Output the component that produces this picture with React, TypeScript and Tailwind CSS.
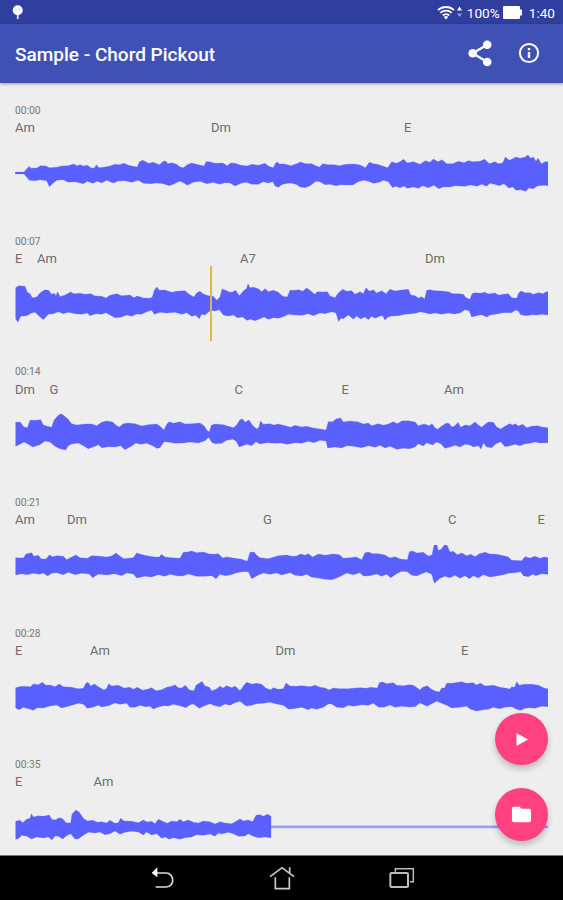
import { MdFolder } from "react-icons/md";

interface Chord {
  name: string;
  x: number;
}

interface Line {
  time: string;
  chords: Chord[];
  // baseline of the wave inside its own coordinates (3 units per px)
  mid: number;
  top: string;
  bottom: string;
  end?: boolean;
}

const lines: Line[] = [
  {
    time: "00:00",
    chords: [
      { name: "Am", x: 0 },
      { name: "Dm", x: 196 },
      { name: "E", x: 389 },
    ],
    mid: 218,
    top: "46,215 72,215 80,206 88,198 92,204 110,203 122,196 138,197 148,202 170,201 185,197 205,196 220,191 232,196 240,193 250,197 262,195 275,204 283,203 289,193 297,202 315,200 330,197 345,192 358,193 372,189 385,195 400,198 412,200 418,184 428,180 437,184 445,189 460,186 478,193 490,183 497,182 504,190 515,187 530,192 540,200 550,202 562,193 575,188 590,192 612,197 618,184 628,184 645,189 668,188 682,196 692,188 705,189 720,194 740,197 757,192 775,195 795,189 806,198 820,202 827,188 832,185 838,191 853,191 873,196 886,192 902,185 917,190 935,190 958,201 968,190 985,193 1003,193 1018,196 1038,192 1062,191 1080,194 1096,202 1108,186 1120,190 1132,192 1150,198 1163,202 1175,184 1190,189 1200,184 1211,177 1222,188 1240,184 1260,192 1276,181 1290,186 1300,176 1314,184 1326,178 1340,190 1358,190 1375,183 1392,187 1405,181 1420,184 1440,183 1454,177 1468,190 1485,184 1495,190 1508,188 1516,170 1528,180 1538,175 1548,170 1560,174 1574,171 1584,164 1592,174 1600,170 1608,183 1614,173 1624,190 1636,184 1644,184",
    bottom: "1644,256 1630,255 1612,257 1600,265 1586,263 1578,273 1562,268 1548,270 1538,260 1526,263 1512,250 1498,256 1484,252 1470,249 1460,258 1445,252 1430,258 1412,254 1395,258 1378,257 1365,256 1350,260 1330,260 1316,265 1302,255 1285,262 1268,256 1255,264 1240,260 1222,264 1212,257 1200,262 1186,258 1178,262 1165,244 1150,240 1138,246 1120,249 1105,243 1090,240 1075,244 1058,254 1040,254 1022,253 1008,256 990,252 975,253 960,244 948,243 930,256 915,262 900,260 888,252 870,248 855,250 843,254 836,261 826,258 818,244 805,248 790,244 775,252 755,252 740,246 725,248 705,257 690,248 675,247 658,252 640,246 620,250 600,243 580,246 562,255 548,246 538,243 520,252 508,256 490,250 470,248 452,250 430,249 415,240 395,246 375,241 355,242 340,248 320,240 305,248 293,243 278,249 262,243 250,250 240,248 225,244 205,246 190,238 170,240 160,248 148,259 140,241 120,238 105,241 88,240 72,221 46,221",
  },
  {
    time: "00:07",
    chords: [
      { name: "E", x: 0 },
      { name: "Am", x: 22 },
      { name: "A7", x: 225 },
      { name: "Dm", x: 410 },
    ],
    mid: 221,
    top: "47,172 56,166 75,168 82,186 90,190 97,202 110,200 120,188 133,179 145,179 155,192 163,189 168,196 173,184 180,199 195,194 212,185 222,190 240,189 255,192 272,190 285,197 305,198 318,203 330,195 350,190 365,196 390,194 402,202 412,197 430,203 450,204 457,200 463,180 470,170 478,180 495,179 515,186 530,183 555,181 567,192 582,200 590,188 600,183 610,191 625,196 640,198 650,210 660,200 666,176 680,181 690,186 700,184 706,179 718,196 730,182 740,174 744,160 750,172 762,171 776,176 785,184 795,175 805,184 820,180 835,186 848,198 862,200 870,180 885,180 897,178 908,183 920,173 930,180 944,192 952,184 970,185 982,184 990,197 1005,202 1015,188 1028,177 1040,183 1055,181 1065,192 1080,184 1090,190 1098,172 1108,183 1120,178 1130,188 1145,181 1158,190 1170,177 1185,182 1205,179 1225,177 1232,194 1245,196 1255,203 1265,199 1274,206 1280,180 1290,178 1303,181 1325,182 1345,184 1358,190 1375,190 1390,192 1398,202 1410,207 1416,190 1425,187 1440,189 1455,186 1465,191 1485,188 1495,194 1512,192 1525,190 1535,202 1550,204 1556,188 1563,182 1575,187 1590,187 1600,192 1615,187 1630,190 1638,184 1644,184",
    bottom: "1644,254 1625,252 1612,254 1595,253 1580,256 1562,253 1555,242 1545,240 1535,247 1510,247 1490,251 1470,254 1460,260 1445,253 1430,256 1415,260 1408,242 1395,238 1380,248 1362,251 1345,248 1325,252 1305,248 1290,251 1275,247 1260,244 1250,248 1235,250 1215,252 1195,256 1175,257 1162,261 1155,270 1148,256 1140,257 1125,264 1115,258 1105,268 1095,260 1082,266 1070,257 1060,267 1045,254 1030,265 1022,264 1016,274 1008,248 995,244 975,250 960,248 940,256 925,250 905,255 885,254 865,252 848,260 835,264 820,262 805,267 792,260 778,266 765,271 752,267 740,270 728,260 712,262 700,254 685,257 670,254 658,238 645,242 632,240 615,254 605,252 598,265 587,255 575,258 560,247 545,252 525,246 500,248 480,246 463,252 455,240 440,244 425,252 410,251 395,258 380,254 362,261 345,262 330,254 318,247 305,252 288,250 270,256 262,248 245,252 225,250 205,246 190,250 175,244 160,250 145,252 130,268 118,258 105,246 95,248 80,256 62,258 54,276 47,266",
  },
  {
    time: "00:14",
    chords: [
      { name: "Dm", x: 0 },
      { name: "G", x: 34.5 },
      { name: "C", x: 219.5 },
      { name: "E", x: 326.5 },
      { name: "Am", x: 429 },
    ],
    mid: 223,
    top: "47,188 60,187 72,202 82,204 90,182 105,182 122,180 130,196 142,200 155,203 162,182 172,170 183,161 194,170 204,178 215,192 230,196 255,193 275,193 290,198 305,188 320,184 338,187 350,198 358,202 370,192 385,190 405,192 425,199 445,195 470,193 480,200 492,211 500,194 508,186 520,191 540,186 555,193 575,192 600,190 612,198 622,213 628,216 634,197 645,193 670,195 685,200 700,204 710,196 720,180 728,178 735,188 747,181 757,196 770,208 777,202 781,184 790,194 810,192 822,196 835,193 855,198 872,203 885,197 905,202 920,200 940,205 960,208 978,211 985,186 998,186 1008,178 1022,175 1030,187 1050,184 1075,187 1090,193 1105,190 1115,198 1135,192 1150,197 1165,193 1180,186 1192,192 1205,184 1225,183 1245,187 1255,198 1272,193 1288,198 1296,192 1305,204 1313,209 1325,199 1340,190 1348,192 1355,202 1364,199 1374,188 1382,203 1395,196 1410,198 1425,187 1435,196 1445,203 1455,194 1465,187 1480,188 1490,202 1502,208 1515,200 1528,192 1538,196 1546,192 1555,199 1568,194 1580,204 1595,200 1612,198 1625,202 1644,204",
    bottom: "1644,249 1620,250 1605,247 1590,251 1575,252 1560,258 1545,254 1530,258 1515,261 1502,246 1488,252 1475,264 1460,262 1450,250 1443,268 1435,258 1420,262 1410,256 1395,254 1380,262 1365,257 1350,262 1335,266 1322,252 1310,247 1298,256 1280,249 1270,259 1255,252 1245,262 1230,267 1210,266 1190,269 1170,260 1155,265 1140,257 1125,263 1105,258 1085,264 1060,260 1040,258 1025,265 1005,262 983,265 978,244 960,242 942,249 925,245 905,251 885,249 862,254 843,250 825,251 800,249 780,253 768,246 755,258 740,254 718,262 708,244 698,239 680,242 665,251 645,252 635,248 626,233 615,243 595,250 570,247 550,250 525,251 505,247 492,246 480,264 470,266 458,258 440,251 422,254 408,250 395,259 375,270 362,258 345,262 325,261 305,264 295,255 285,260 265,267 250,258 235,250 215,253 205,258 197,271 180,267 165,260 150,247 135,244 120,255 98,262 85,254 72,247 60,254 47,260",
  },
  {
    time: "00:21",
    chords: [
      { name: "Am", x: 0 },
      { name: "Dm", x: 52 },
      { name: "G", x: 248 },
      { name: "C", x: 433 },
      { name: "E", x: 522.5 },
    ],
    mid: 616,
    top: "47,594 70,595 78,583 95,579 102,590 115,587 124,598 138,598 148,586 158,591 170,588 190,590 200,600 215,592 228,586 240,594 262,596 275,588 300,590 320,592 335,589 348,580 360,590 372,597 400,594 410,580 422,584 440,588 465,592 478,592 484,584 495,592 515,594 540,596 550,578 562,577 575,574 590,579 610,577 625,582 640,584 655,582 668,595 680,592 705,596 725,599 742,605 750,578 762,577 770,587 780,594 805,597 820,593 835,588 860,586 875,590 888,590 902,583 915,587 925,582 938,592 955,583 975,587 1000,583 1018,585 1030,596 1050,594 1068,592 1085,600 1095,579 1105,577 1118,582 1135,582 1155,586 1170,595 1185,591 1200,598 1222,600 1228,576 1238,574 1250,580 1270,578 1285,589 1296,586 1303,553 1310,553 1315,573 1325,567 1334,555 1342,558 1350,577 1360,575 1372,585 1385,580 1400,588 1412,584 1425,591 1438,582 1455,578 1470,583 1490,584 1510,588 1525,592 1535,602 1565,603 1575,591 1590,595 1605,590 1620,596 1632,592 1644,594",
    bottom: "1644,644 1625,642 1608,648 1598,644 1585,651 1570,648 1562,636 1545,639 1525,641 1510,645 1490,649 1470,652 1450,645 1435,655 1420,648 1408,657 1395,648 1380,656 1365,647 1350,654 1335,650 1320,656 1303,671 1295,644 1280,637 1265,642 1250,649 1235,647 1222,636 1205,635 1190,642 1172,654 1160,644 1145,650 1130,643 1110,648 1090,649 1080,639 1060,645 1040,640 1025,648 1008,656 995,660 975,659 955,655 935,653 920,644 905,649 885,647 870,639 845,646 830,640 810,644 790,640 775,646 755,657 745,636 725,636 705,641 690,646 675,648 660,644 648,657 635,648 615,650 590,650 565,643 548,649 530,648 510,644 495,650 475,645 455,652 435,650 410,655 400,643 380,640 365,648 345,642 320,646 295,643 278,654 268,643 245,641 225,645 205,638 190,645 170,639 155,641 143,649 130,640 118,644 100,641 80,645 65,642 47,646",
  },
  {
    time: "00:28",
    chords: [
      { name: "E", x: 0 },
      { name: "Am", x: 75 },
      { name: "Dm", x: 260.5 },
      { name: "E", x: 446 },
    ],
    mid: 228,
    top: "47,203 65,199 92,200 100,192 115,194 127,187 138,196 150,195 165,200 178,192 190,200 215,202 235,206 250,205 258,190 264,187 272,198 283,192 295,200 312,210 320,205 326,191 335,198 355,196 372,204 390,202 400,208 412,202 428,211 445,207 455,203 468,212 485,209 500,202 515,199 525,194 535,203 545,204 556,196 568,210 582,212 588,196 600,188 606,184 614,197 628,202 635,212 648,208 660,199 670,204 680,197 695,203 705,198 720,212 730,198 740,187 755,192 770,190 785,193 798,205 812,209 820,203 835,208 850,206 858,189 870,198 885,199 905,197 930,200 945,196 960,202 975,204 988,210 1000,204 1020,206 1045,206 1065,204 1082,203 1098,205 1112,202 1132,204 1138,188 1148,186 1160,191 1180,188 1190,196 1210,197 1228,194 1240,196 1252,204 1260,210 1268,202 1282,197 1292,206 1305,213 1318,216 1325,204 1334,204 1340,190 1355,190 1375,187 1385,185 1400,190 1420,188 1428,195 1442,190 1455,198 1480,196 1500,202 1515,204 1530,207 1535,200 1544,202 1550,185 1558,196 1572,193 1595,193 1615,196 1632,204 1644,207",
    bottom: "1644,260 1625,259 1605,265 1590,263 1575,265 1562,271 1550,268 1535,260 1515,262 1498,266 1480,262 1465,268 1450,269 1430,273 1410,267 1400,259 1380,262 1355,264 1340,256 1325,250 1310,244 1295,251 1282,259 1260,249 1245,260 1225,261 1205,259 1185,262 1170,255 1152,262 1135,261 1120,250 1105,256 1085,254 1060,259 1045,256 1030,263 1010,262 995,252 985,252 970,262 950,268 935,264 925,269 905,262 880,266 865,267 850,256 830,252 810,247 790,250 770,251 755,256 738,258 720,244 705,248 690,256 675,252 660,260 645,257 630,251 612,258 598,265 580,252 570,254 558,263 540,257 520,253 505,258 490,257 475,261 460,267 450,259 435,260 420,256 405,262 390,262 380,250 360,253 345,249 325,257 305,261 295,256 278,262 262,265 250,253 235,250 218,255 200,260 185,264 170,255 150,258 130,264 112,263 100,271 85,266 70,262 58,269 47,264",
  },
  {
    time: "00:35",
    chords: [
      { name: "E", x: 0 },
      { name: "Am", x: 78.5 },
    ],
    mid: 620,
    end: true,
    top: "47,603 60,600 68,607 80,597 90,594 94,580 100,590 115,586 130,588 148,584 155,597 165,599 178,592 188,595 198,607 212,608 216,582 222,574 228,569 238,576 250,594 262,602 278,600 292,606 305,604 320,608 330,600 345,609 355,607 362,594 372,602 395,603 415,607 430,599 442,605 455,603 465,610 475,597 488,603 502,609 515,602 530,604 540,597 550,604 565,599 580,606 595,608 610,602 630,604 645,611 660,604 675,608 695,610 710,602 720,596 730,602 745,599 758,604 768,585 780,583 790,588 803,582 813,588",
    bottom: "813,652 795,650 775,652 760,648 745,640 735,647 715,648 700,640 685,636 665,641 655,638 645,648 630,641 610,645 590,643 575,650 555,652 540,657 520,652 508,657 495,650 485,654 470,640 455,644 440,635 430,644 415,635 395,633 375,636 360,642 345,632 330,640 315,643 300,635 285,638 265,636 250,645 235,656 225,656 212,640 200,646 188,656 175,648 165,647 156,659 145,650 130,653 110,650 95,656 80,648 65,645 55,655 47,657",
  },
];

function Waveform({ line }: { line: Line }) {
  return (
    <svg className="block h-10 w-[533px]" viewBox={`45 ${line.mid - 60} 1599 120`}>
      {line.end && (
        <rect x="813" y={line.mid - 4.5} width="831" height="8" fill="#9a9ff5" />
      )}
      <polygon
        points={`${line.top} ${line.bottom}`}
        fill="#5960fd"
        stroke="#5960fd"
        strokeOpacity="0.5"
        strokeWidth="1.5"
      />
    </svg>
  );
}

function ChordLine({ line, playhead }: { line: Line; playhead?: number }) {
  return (
    <div className="relative h-[130.8px] shrink-0">
      <div className="h-[14px] pt-[0.3px] text-[10.3px] leading-[14px] text-[#777]">{line.time}</div>
      <div className="relative mt-[1.5px] h-[18px] text-[13px] leading-[18px] text-[#6c6c6c]">
        {line.chords.map((c) => (
          <span key={c.x} className="absolute" style={{ left: c.x }}>
            {c.name}
          </span>
        ))}
      </div>
      <div className="mt-[15.9px]">
        <Waveform line={line} />
      </div>
      {playhead !== undefined && (
        <div
          className="absolute top-[32px] h-[75px] w-[2.5px] bg-[#d9b94e]"
          style={{ left: playhead }}
        />
      )}
    </div>
  );
}

function StatusBar() {
  return (
    <div className="flex h-6 shrink-0 items-center justify-between bg-[#303f9f] pr-2 pl-3 text-white">
      <svg className="h-4 w-3" viewBox="0 0 12 16">
        <circle cx="5.7" cy="6.2" r="5" fill="#fff" />
        <path d="M5.7 10v5" stroke="#fff" strokeWidth="1.6" />
        <circle cx="3.9" cy="5.2" r="0.6" fill="#a9b0dc" />
        <circle cx="7.5" cy="5.2" r="0.6" fill="#a9b0dc" />
      </svg>
      <div className="flex items-center leading-6">
        <svg className="h-[15px] w-[18px]" viewBox="0 0 18 15" fill="none" stroke="#fff">
          <path d="M1 5.2a11.6 11.6 0 0 1 16 0M3.4 7.9a8.2 8.2 0 0 1 11.2 0M5.8 10.5a4.7 4.7 0 0 1 6.4 0" strokeWidth="1.8" />
          <path d="M9 14.5l-2.2-2.4a3 3 0 0 1 4.4 0z" fill="#fff" stroke="none" />
        </svg>
        <svg className="mr-[5px] ml-[2px] h-3 w-[5px]" viewBox="0 0 5 12">
          <path d="M2.5 0.5L5 4.5H0z" fill="#fff" />
          <path d="M2.5 11L5 7.5H0z" fill="#98a0d4" />
        </svg>
        <span className="w-[33px] pt-[1px] text-[13.6px]">100%</span>
        <svg className="mr-[3px] ml-[3px] h-[13px] w-[19px]" viewBox="0 0 19 13" fill="#fff">
          <rect x="0" y="0" width="17" height="13" rx="1" />
          <rect x="16" y="3.5" width="3" height="6" />
        </svg>
        <span className="ml-1 pt-[1px] text-[13.6px]">1:40</span>
      </div>
    </div>
  );
}

function AppBar() {
  return (
    <div className="z-10 flex h-[59px] shrink-0 items-center bg-[#3f51b5] px-[15px] text-white shadow-[0_1px_3px_rgba(0,0,0,0.35)]">
      <h1 className="flex-1 pt-[3px] text-[19px] font-medium whitespace-nowrap">
        Sample - Chord Pickout
      </h1>
      <svg className="h-[27px] w-6" viewBox="0 0 24 27" fill="#fff">
        <path d="M19.2 4.7L4.7 13.3L19.2 22" fill="none" stroke="#fff" strokeWidth="2.3" />
        <circle cx="19.2" cy="4.7" r="4.3" />
        <circle cx="4.7" cy="13.3" r="4.3" />
        <circle cx="19.2" cy="22" r="4.3" />
      </svg>
      <svg className="mr-[7px] mb-[1px] ml-[25px] size-6" viewBox="0 0 24 24" fill="none" stroke="#fff">
        <circle cx="12" cy="12" r="9.1" strokeWidth="2" />
        <path d="M12 11v6M12 7v2.2" strokeWidth="2.4" />
      </svg>
    </div>
  );
}

function NavBar() {
  return (
    <div className="flex h-[45px] shrink-0 items-center justify-center gap-[91.5px] border-t border-[#777] bg-black pl-[1px]">
      <svg className="h-7 w-7" viewBox="57 43 84 84" fill="none" stroke="#ddd" strokeWidth="5">
        <path d="M80 70h28c26 0 28 42 0 42H77" />
        <path d="M65 70l17-17v30z" fill="#fff" stroke="none" />
      </svg>
      <svg className="h-7 w-7" viewBox="414 43 84 84" fill="none" stroke="#ccc" strokeWidth="5">
        <path d="M420 81l36-27 36 27M479 53v17M436 83v34h42V83" />
      </svg>
      <svg className="h-7 w-7" viewBox="773 43 84 84" fill="none" stroke="#bbb">
        <rect x="780" y="70" width="53" height="42" rx="3" strokeWidth="6" />
        <path d="M795 66v-9h54v39h-10" strokeWidth="4.5" />
      </svg>
    </div>
  );
}

export default function App() {
  return (
    <div className="relative flex h-[900px] w-[563px] flex-col overflow-hidden bg-[#eee] font-[Roboto,sans-serif]">
      <StatusBar />
      <AppBar />
      <main className="min-h-0 flex-1 overflow-hidden px-[15px] pt-[20.5px]">
        {lines.map((line, i) => (
          <ChordLine key={line.time} line={line} playhead={i === 1 ? 194.7 : undefined} />
        ))}
      </main>
      <NavBar />

      {/* floating buttons over the waveform list */}
      <div className="absolute top-[712.7px] right-[15px] z-20 flex flex-col gap-[22.6px]">
        <button
          type="button"
          aria-label="Play"
          className="flex size-[52.7px] items-center justify-center rounded-full bg-[#ff4081] shadow-[0_4px_6px_rgba(0,0,0,0.22)]"
        >
          <svg className="h-[13px] w-3" viewBox="0 0 12 13">
            <path d="M0.5 0v13L12 6.5z" fill="#fff" />
          </svg>
        </button>
        <button
          type="button"
          aria-label="Open file"
          className="flex size-[52.7px] items-center justify-center rounded-full bg-[#ff4081] shadow-[0_4px_6px_rgba(0,0,0,0.22)]"
        >
          <MdFolder className="size-[23px] text-white" />
        </button>
      </div>
    </div>
  );
}
